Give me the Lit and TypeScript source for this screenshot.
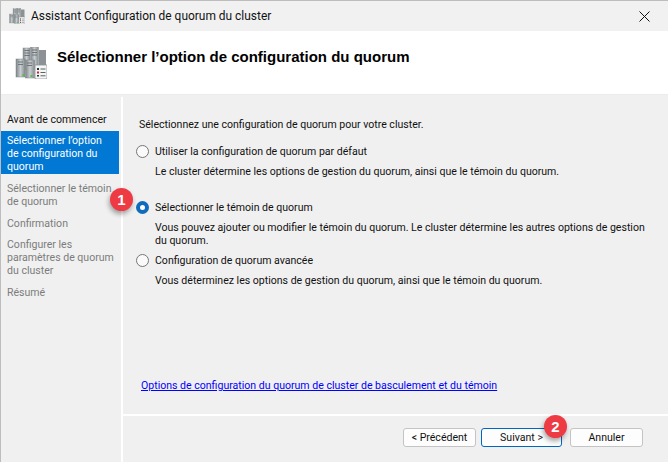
import { LitElement, html, css, svg } from "lit";
import { customElement } from "lit/decorators.js";

const serverIcon = (s: number, id: string) => html`<svg width=${s} height=${s} viewBox="0 0 32 32" aria-hidden="true">
  ${svg`
  <defs>
    <linearGradient id=${id} x1="0" x2="1"><stop offset="0" stop-color="#7d8589"/><stop offset=".5" stop-color="#c8cdcf"/><stop offset="1" stop-color="#878d90"/></linearGradient>
  </defs>
  <rect x="8" y="1" width="7" height="22" fill="url(#${id})" stroke="#8a9094" stroke-width=".5"/>
  <rect x="15.500" y="0" width="8" height="22" fill="url(#${id})" stroke="#8a9094" stroke-width=".5"/>
  <rect x="24" y="3" width="7" height="16" fill="#8b9194"/>
  <rect x="1" y="12" width="9" height="18" fill="url(#${id})" stroke="#7d8387" stroke-width=".5"/>
  <rect x="10.500" y="13" width="9" height="18" fill="url(#${id})" stroke="#7d8387" stroke-width=".5"/>
  <path d="M9.500 3.500h5M9.500 6h5M9.500 8.500h5M17 3h5M17 5.500h5M17 8h5M3 15h5M3 17.500h5M12 16h5M12 18.500h5" stroke="#5d6468" stroke-width=".8"/>
  <rect x="7.500" y="27" width="2" height="2" fill="#53c04a"/>
  <rect x="15.500" y="28" width="2" height="2" fill="#53c04a"/>
  <rect x="20" y="18" width="12" height="14" fill="#f4f5f5" stroke="#8d9396" stroke-width=".8"/>
  <rect x="22" y="21" width="2" height="2" fill="#28303a"/>
  <rect x="22" y="24.500" width="2" height="2" fill="#c4282c"/>
  <rect x="22" y="28" width="2" height="1.500" fill="#28303a"/>
  <path d="M25.500 22h5M25.500 25.500h5M25.500 28.800h5" stroke="#4a5056" stroke-width=".9"/>
  `}
</svg>`;

@customElement("app-root")
export class AppRoot extends LitElement {
  static styles = css`
    :host {
      display: block;
      width: 668px;
      height: 462px;
      overflow: hidden;
      font-family: Roboto, "Liberation Sans", sans-serif;
      font-size: 10.55px;
      color: #111;
      background: #f0f0f0;
    }
    .window {
      position: relative;
      width: 668px;
      height: 462px;
      box-sizing: border-box;
      border-top: 1px solid #bdbdbd;
      border-left: 1px solid #bdbdbd;
      display: flex;
      flex-direction: column;
    }
    .title {
      height: 30px;
      flex: none;
      display: flex;
      align-items: center;
      gap: 6px;
      padding-left: 8px;
      background: #f1f1f1;
      font-size: 11.95px;
    }
    .title .tx { flex: 1; }
    .close { width: 11px; height: 11px; margin-right: 18px; }
    .header {
      height: 64px;
      flex: none;
      box-sizing: border-box;
      background: #fff;
      display: flex;
      align-items: center;
      gap: 10px;
      padding: 0 0 0 14px;
      border-bottom: 1px solid #ececec;
      font: bold 15px "Liberation Sans", Arial, sans-serif;
      color: #000;
    }
    .header span { margin-bottom: 13px; }
    .main {
      flex: 1;
      display: flex;
      border-top: 2px solid #f0f0f0;
      min-height: 0;
    }
    .side {
      width: 120px;
      flex: none;
      padding-top: 16px;
      line-height: 13px;
      color: #7c7c7c;
      box-sizing: border-box;
    }
    .side div { padding: 0 2px 0 6px; }
    .side .done { color: #111; margin-bottom: 5px; }
    .side .cur {
      background: #0078d4;
      color: #fff;
      margin-right: 2px;
      padding: 3px 2px 0 6px;
      height: 43px;
      box-sizing: border-box;
      margin-bottom: 8px;
    }
    .side .gap { margin-bottom: 9px; }
    .side .tight { margin-bottom: 8px; }
    .divider { width: 2px; flex: none; background: #fff; }
    .right { flex: 1; display: flex; flex-direction: column; min-width: 0; }
    .content {
      height: 319px;
      flex: none;
      box-sizing: border-box;
      padding: 21px 0 22px 16px;
      line-height: 13px;
      display: flex;
      flex-direction: column;
      border-bottom: 2px solid #fff;
    }
    .intro { margin-bottom: 12px; }
    .opt { display: flex; align-items: center; gap: 6px; height: 16px; margin-left: -3px; }
    .radio {
      width: 11px; height: 11px; border-radius: 50%;
      border: 1px solid #757575; background: #fafafa; flex: none;
    }
    .radio.on { border: 4px solid #0f6cbd; width: 5px; height: 5px; background: #fff; }
    .desc { margin: 6px 0 0 16px; }
    .o1 { margin-bottom: 21px; }
    .o2 { margin-bottom: 5px; }
    .link {
      margin-top: auto;
      margin-left: 2px;
      color: #0000ff;
      text-decoration: underline;
    }
    .footer {
      flex: 1;
      display: flex;
      justify-content: flex-end;
      align-items: flex-start;
      padding: 12px 25px 0 0;
    }
    button {
      font: inherit;
      color: #111;
      height: 19px;
      width: 73px;
      padding: 0;
      background: #fdfdfd;
      border: 1px solid #c4c4c4;
      border-radius: 3px;
    }
    button.primary { border-color: #0067c0; width: 81px; margin: 0 8px 0 5px; }
    .badge {
      position: absolute;
      width: 23px;
      height: 23px;
      border-radius: 50%;
      background: #ee3a43;
      color: #fff;
      font: bold 15px "Liberation Sans", Arial, sans-serif;
      display: flex;
      align-items: center;
      justify-content: center;
      box-shadow: -1px 3px 5px rgba(0,0,0,.35);
    }
    .b1 { left: 109px; top: 187px; }
    .b2 { left: 543px; top: 414px; }
  `;

  render() {
    return html`<div class="window">
      <div class="title">
        ${serverIcon(16, "ga")}
        <span class="tx">Assistant Configuration de quorum du cluster</span>
        <svg class="close" viewBox="0 0 11 11"><path d="M.5.5l10 10M10.500.5l-10 10" stroke="#111" stroke-width="1"/></svg>
      </div>
      <div class="header">${serverIcon(32, "gb")}<span>Sélectionner l’option de configuration du quorum</span></div>
      <div class="main">
        <div class="side">
          <div class="done">Avant de commencer</div>
          <div class="cur">Sélectionner l’option<br />de configuration du<br />quorum</div>
          <div class="gap">Sélectionner le témoin<br />de quorum</div>
          <div class="tight">Confirmation</div>
          <div class="gap">Configurer les<br />paramètres de quorum<br />du cluster</div>
          <div>Résumé</div>
        </div>
        <div class="divider"></div>
        <div class="right">
          <div class="content">
            <div class="intro">Sélectionnez une configuration de quorum pour votre cluster.</div>
            <div class="o1">
              <div class="opt"><span class="radio"></span>Utiliser la configuration de quorum par défaut</div>
              <div class="desc">Le cluster détermine les options de gestion du quorum, ainsi que le témoin du quorum.</div>
            </div>
            <div class="o2">
              <div class="opt"><span class="radio on"></span>Sélectionner le témoin de quorum</div>
              <div class="desc">Vous pouvez ajouter ou modifier le témoin du quorum. Le cluster détermine les autres options de gestion<br />du quorum.</div>
            </div>
            <div>
              <div class="opt"><span class="radio"></span>Configuration de quorum avancée</div>
              <div class="desc">Vous déterminez les options de gestion du quorum, ainsi que le témoin du quorum.</div>
            </div>
            <a class="link">Options de configuration du quorum de cluster de basculement et du témoin</a>
          </div>
          <div class="footer">
            <button>&lt; Précédent</button>
            <button class="primary">Suivant &gt;</button>
            <button>Annuler</button>
          </div>
        </div>
      </div>
      <div class="badge b1">1</div>
      <div class="badge b2">2</div>
    </div>`;
  }
}
